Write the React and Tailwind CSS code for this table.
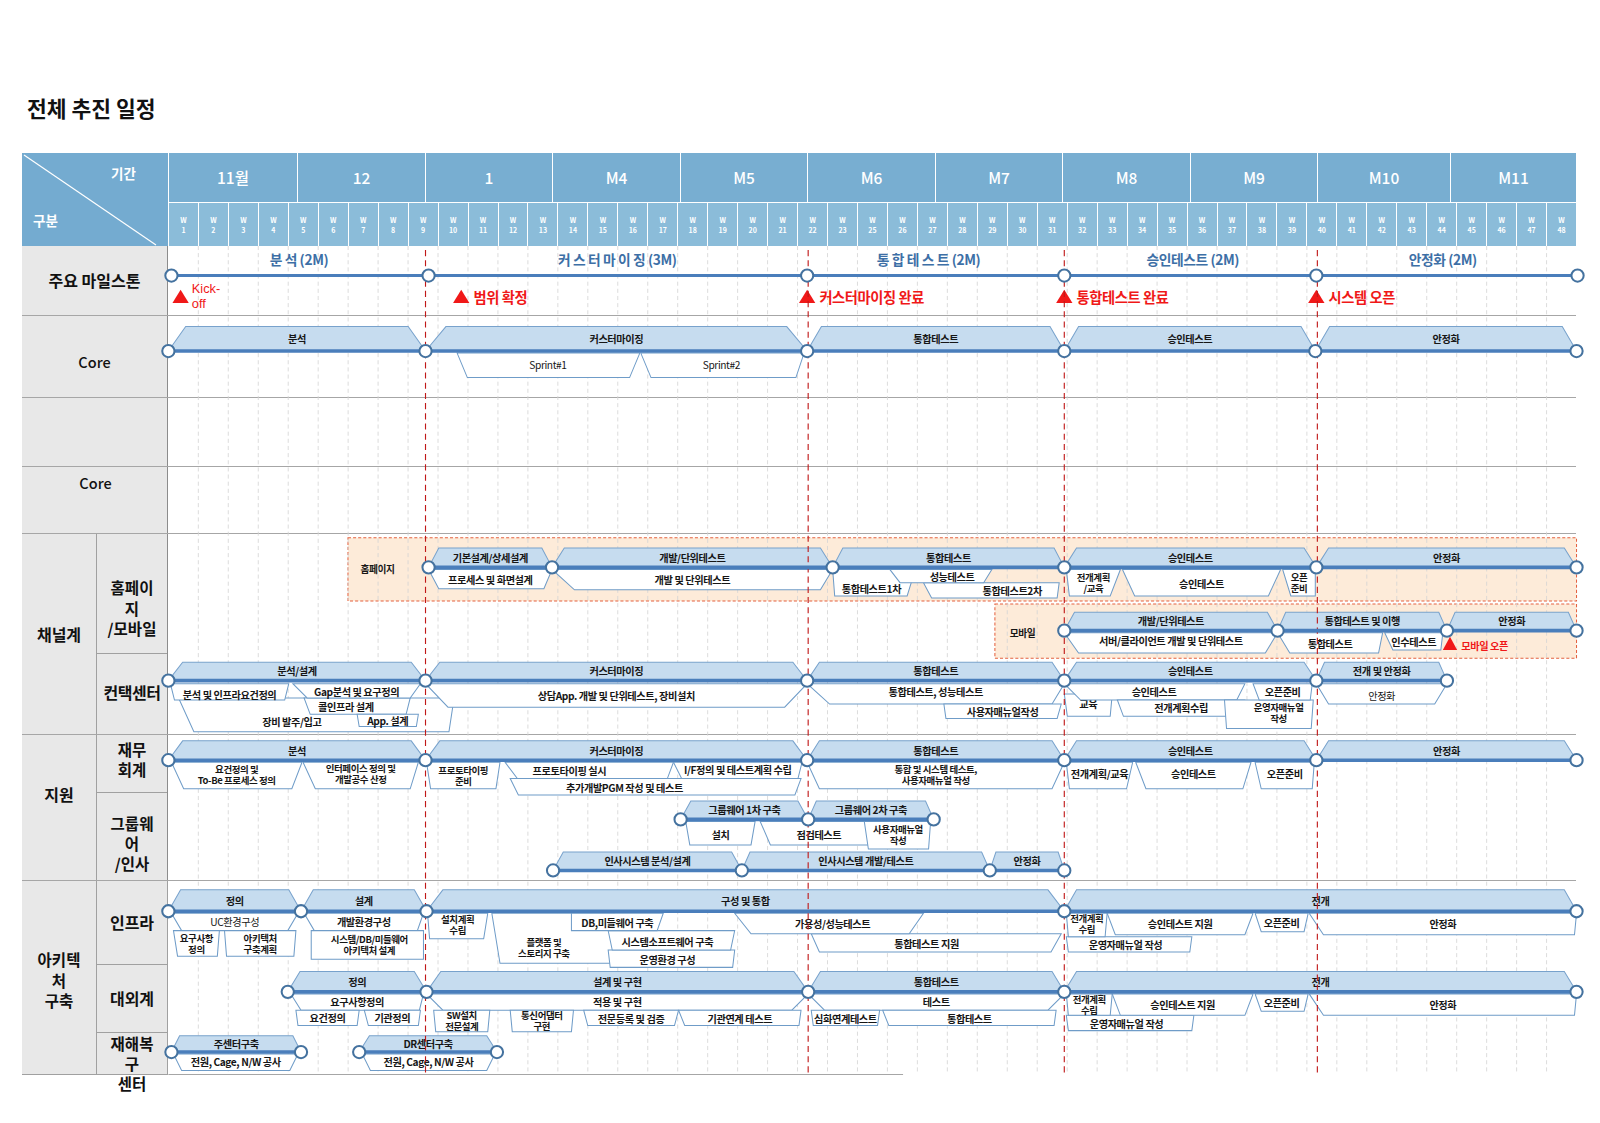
import React from 'react'

const MONTHS = [
  ['11월', 129], ['12', 128], ['1', 127], ['M4', 128], ['M5', 127], ['M6', 128],
  ['M7', 127], ['M8', 128], ['M9', 127], ['M10', 133], ['M11', 126],
]
const WEEKS = Array.from({ length: 48 }, (_, i) => i + 1).filter((n) => n !== 24)

// chart coordinates are drawn on a 1568-wide canvas, scaled up to the page
const X0 = 165
const WW = 1380 / 47

// [a, b, lineY, topY, label, inset]
const PHASES = [
  // core
  [165, 417, 344, 320, '분석', 17], [417, 791, 344, 320, '커스터마이징', 20], [791, 1043, 344, 320, '통합테스트', 14],
  [1043, 1289, 344, 320, '승인테스트', 14], [1289, 1545, 344, 320, '안정화', 14],
  // homepage
  [420, 541, 556, 537, '기본설계/상세설계', 10], [541, 816, 556, 537, '개발/단위테스트', 12], [816, 1043, 556, 537, '통합테스트', 10],
  [1043, 1290, 556, 537, '승인테스트', 12], [1290, 1545, 556, 537, '안정화', 12],
  // mobile
  [1043, 1252, 618, 600, '개발/단위테스트', 10], [1252, 1418, 618, 600, '통합테스트 및 이행', 8], [1418, 1545, 618, 600, '안정화', 8],
  // contact center
  [165, 417, 667, 649, '분석/설계', 14], [417, 791, 667, 649, '커스터마이징', 14], [791, 1043, 667, 649, '통합테스트', 12],
  [1043, 1290, 667, 649, '승인테스트', 12], [1290, 1418, 667, 649, '전개 및 안정화', 8],
  // finance
  [165, 417, 745, 726, '분석', 14], [417, 791, 745, 726, '커스터마이징', 14], [791, 1043, 745, 726, '통합테스트', 12],
  [1043, 1290, 745, 726, '승인테스트', 12], [1290, 1545, 745, 726, '안정화', 12],
  // groupware
  [667, 792, 803, 785, '그룹웨어 1차 구축', 10], [792, 915, 803, 785, '그룹웨어 2차 구축', 8],
  // hr
  [542, 727, 853, 835, '인사시스템 분석/설계', 10], [727, 970, 853, 835, '인사시스템 개발/테스트', 8], [970, 1043, 853, 835, '안정화', 6],
  // infra
  [165, 295, 893, 872, '정의', 12], [295, 418, 893, 872, '설계', 12], [418, 1043, 893, 872, '구성 및 통합', 16],
  [1043, 1545, 893, 872, '전개', 12],
  // external
  [282, 418, 972, 952, '정의', 12], [418, 792, 972, 952, '설계 및 구현', 14], [792, 1043, 972, 952, '통합테스트', 12],
  [1043, 1545, 972, 952, '전개', 12],
  // dr
  [168, 295, 1031, 1015, '주센터구축', 8], [352, 487, 1031, 1015, 'DR센터구축', 10],
]

const TRACKS = [
  { y: 344, a: 165, b: 1545, nodes: [165, 417, 791, 1043, 1289, 1545] },
  { y: 556, a: 420, b: 1545, nodes: [420, 541, 816, 1043, 1290, 1545] },
  { y: 618, a: 1043, b: 1545, nodes: [1043, 1252, 1418, 1545] },
  { y: 667, a: 165, b: 1418, nodes: [165, 417, 791, 1043, 1290, 1418] },
  { y: 745, a: 165, b: 1545, nodes: [165, 417, 791, 1043, 1290, 1545] },
  { y: 803, a: 667, b: 915, nodes: [667, 792, 915] },
  { y: 853, a: 542, b: 1043, nodes: [542, 727, 970, 1043] },
  { y: 893, a: 165, b: 1545, nodes: [165, 295, 418, 1043, 1545] },
  { y: 972, a: 282, b: 1545, nodes: [282, 418, 792, 1043, 1545] },
  { y: 1031, a: 168, b: 295, nodes: [168, 295] },
  { y: 1031, a: 352, b: 487, nodes: [352, 487] },
]

const TASKS = [
  // core
  { a: 448, b: 627, y: 346, bot: 370, l: 10, r: 10, t: 'Sprint#1', w: 400, lx: 537, ly: 357 },
  { a: 628, b: 788, y: 346, bot: 370, l: 10, r: 8, t: 'Sprint#2', w: 400, lx: 707, ly: 357 },
  // homepage
  { a: 420, b: 541, y: 558, bot: 577, l: 10, r: 8, t: '프로세스 및 화면설계' },
  { a: 541, b: 816, y: 558, bot: 578, l: 22, r: 12, t: '개발 및 단위테스트', ly: 567 },
  { a: 905, b: 1038, y: 571, bot: 586, l: 8, r: 2, t: '통합테스트2차', lx: 992, ly: 578 },
  { a: 816, b: 897, y: 558, bot: 584, l: 2, r: 8, t: '통합테스트1차', lx: 854, ly: 576 },
  { a: 872, b: 972, y: 558, bot: 571, l: 10, r: 8, t: '성능테스트', lx: 933, ly: 564 },
  { a: 1045, b: 1098, y: 558, bot: 584, l: 3, r: 10, t: ['전개계획', '/교육'] },
  { a: 1100, b: 1255, y: 558, bot: 584, l: 12, r: 12, t: '승인테스트' },
  { a: 1257, b: 1289, y: 558, bot: 584, l: 8, r: 0, t: ['오픈', '준비'] },
  // mobile
  { a: 1043, b: 1252, y: 620, bot: 640, l: 14, r: 12, t: '서버/클라이언트 개발 및 단위테스트', ly: 627 },
  { a: 1252, b: 1355, y: 620, bot: 640, l: 12, r: 4, t: '통합테스트', ly: 630 },
  { a: 1357, b: 1414, y: 620, bot: 637, l: 8, r: 2, t: '인수테스트', ly: 628 },
  // contact center
  { a: 175, b: 445, y: 684, bot: 717, l: 15, r: 5, t: '장비 발주/입고', lx: 286, ly: 707 },
  { a: 167, b: 283, y: 670, bot: 686, l: 4, r: 4, t: '분석 및 인프라요건정의', ly: 680 },
  { a: 298, b: 402, y: 684, bot: 700, l: 6, r: 4, t: '콜인프라 설계', lx: 339, ly: 692 },
  { a: 287, b: 412, y: 670, bot: 684, l: 14, r: 10, t: 'Gap분석 및 요구정의', ly: 677 },
  { a: 350, b: 410, y: 700, bot: 712, l: 2, r: 2, t: 'App. 설계' },
  { a: 417, b: 791, y: 670, bot: 693, l: 22, r: 22, t: '상담App. 개발 및 단위테스트, 장비설치', ly: 681 },
  { a: 791, b: 1043, y: 670, bot: 690, l: 22, r: 12, t: '통합테스트, 성능테스트', ly: 677 },
  { a: 925, b: 1040, y: 690, bot: 704, l: 2, r: 4, t: '사용자매뉴얼작성' },
  { a: 1043, b: 1090, y: 680, bot: 702, l: 3, r: 2, t: '교육', ly: 689 },
  { a: 1043, b: 1220, y: 670, bot: 686, l: 16, r: 8, t: '승인테스트', lx: 1131, ly: 677 },
  { a: 1095, b: 1220, y: 686, bot: 702, l: 6, r: 2, t: '전개계획수립', ly: 693 },
  { a: 1200, b: 1287, y: 686, bot: 714, l: 2, r: 2, t: ['운영자매뉴얼', '작성'], lx: 1253, ly: 698 },
  { a: 1228, b: 1286, y: 670, bot: 686, l: 6, r: 2, t: '오픈준비', ly: 677 },
  { a: 1290, b: 1418, y: 670, bot: 690, l: 12, r: 12, t: '안정화', w: 400, ly: 681 },
  // finance
  { a: 168, b: 296, y: 747, bot: 773, l: 12, r: 10, t: ['요건정의 및', 'To-Be 프로세스 정의'], ly: 759 },
  { a: 297, b: 410, y: 747, bot: 773, l: 12, r: 8, t: ['인터페이스 정의 및', '개발공수 산정'], ly: 758 },
  { a: 418, b: 490, y: 747, bot: 773, l: 4, r: 4, t: ['프로토타이핑', '준비'] },
  { a: 500, b: 785, y: 763, bot: 779, l: 8, r: 6, t: '추가개발PGM 작성 및 테스트', lx: 612, ly: 771 },
  { a: 495, b: 660, y: 747, bot: 763, l: 12, r: 6, t: '프로토타이핑 실시', lx: 558, ly: 755 },
  { a: 660, b: 786, y: 747, bot: 763, l: 8, r: 4, t: 'I/F정의 및 테스트계획 수립', ly: 754 },
  { a: 791, b: 1043, y: 747, bot: 773, l: 12, r: 12, t: ['통합 및 시스템 테스트,', '사용자매뉴얼 작성'], ly: 759 },
  { a: 1045, b: 1110, y: 747, bot: 773, l: 3, r: 6, t: '전개계획/교육', ly: 758 },
  { a: 1113, b: 1226, y: 747, bot: 773, l: 10, r: 8, t: '승인테스트', ly: 758 },
  { a: 1230, b: 1288, y: 747, bot: 773, l: 6, r: 2, t: '오픈준비', ly: 758 },
  // groupware
  { a: 672, b: 740, y: 805, bot: 828, l: 4, r: 4, t: '설치', ly: 817 },
  { a: 745, b: 860, y: 805, bot: 828, l: 10, r: 6, t: '점검테스트', ly: 817 },
  { a: 847, b: 912, y: 805, bot: 832, l: 4, r: 2, t: ['사용자매뉴얼', '작성'], lx: 880, ly: 818 },
  // infra
  { a: 168, b: 292, y: 895, bot: 912, l: 10, r: 10, t: 'UC환경구성', w: 400, ly: 903 },
  { a: 170, b: 215, y: 912, bot: 937, l: 4, r: 2, t: ['요구사항', '정의'] },
  { a: 220, b: 290, y: 912, bot: 937, l: 2, r: 2, t: ['아키텍처', '구축계획'] },
  { a: 298, b: 415, y: 895, bot: 912, l: 10, r: 6, t: '개발환경구성', ly: 903 },
  { a: 305, b: 415, y: 912, bot: 940, l: 0, r: 0, t: ['시스템/DB/미들웨어', '아키텍처 설계'], lx: 362 },
  { a: 419, b: 478, y: 895, bot: 920, l: 2, r: 4, t: ['설치계획', '수립'], ly: 906 },
  { a: 482, b: 602, y: 895, bot: 944, l: 8, r: 2, t: ['플랫폼 및', '스토리지 구축'], lx: 533, ly: 929 },
  { a: 596, b: 720, y: 931, bot: 948, l: 2, r: 2, t: '운영환경 구성', lx: 654, ly: 940 },
  { a: 596, b: 720, y: 912, bot: 931, l: 4, r: 4, t: '시스템소프트웨어 구축', lx: 654, ly: 922 },
  { a: 560, b: 650, y: 895, bot: 912, l: 0, r: 6, t: 'DB,미들웨어 구축', ly: 904 },
  { a: 795, b: 1040, y: 915, bot: 933, l: 8, r: 10, t: '통합테스트 지원', lx: 908, ly: 924 },
  { a: 720, b: 905, y: 895, bot: 915, l: 16, r: 14, t: '가용성/성능테스트', lx: 816, ly: 905 },
  { a: 1045, b: 1168, y: 918, bot: 933, l: 2, r: 2, t: '운영자매뉴얼 작성', lx: 1103, ly: 925 },
  { a: 1045, b: 1085, y: 895, bot: 918, l: 2, r: 2, t: ['전개계획', '수립'], ly: 905 },
  { a: 1085, b: 1228, y: 895, bot: 916, l: 8, r: 8, t: '승인테스트 지원', ly: 905 },
  { a: 1230, b: 1282, y: 895, bot: 913, l: 6, r: 4, t: '오픈준비', ly: 904 },
  { a: 1283, b: 1545, y: 895, bot: 916, l: 14, r: 2, t: '안정화', ly: 905 },
  // external
  { a: 285, b: 415, y: 974, bot: 990, l: 10, r: 4, t: '요구사항정의', ly: 981 },
  { a: 290, b: 352, y: 990, bot: 1005, l: 2, r: 2, t: '요건정의', ly: 997 },
  { a: 357, b: 412, y: 990, bot: 1005, l: 4, r: 2, t: '기관정의', ly: 997 },
  { a: 418, b: 792, y: 974, bot: 990, l: 16, r: 16, t: '적용 및 구현', ly: 981 },
  { a: 425, b: 480, y: 990, bot: 1011, l: 2, r: 2, t: ['SW설치', '전문설계'] },
  { a: 500, b: 562, y: 990, bot: 1011, l: 2, r: 2, t: ['통신어댑터', '구현'] },
  { a: 572, b: 665, y: 990, bot: 1005, l: 4, r: 4, t: '전문등록 및 검증', ly: 998 },
  { a: 665, b: 785, y: 990, bot: 1005, l: 6, r: 2, t: '기관연계 테스트', ly: 998 },
  { a: 792, b: 1043, y: 974, bot: 990, l: 16, r: 16, t: '테스트', ly: 981 },
  { a: 795, b: 862, y: 990, bot: 1005, l: 2, r: 2, t: '심화연계테스트', ly: 998 },
  { a: 865, b: 1035, y: 990, bot: 1005, l: 6, r: 2, t: '통합테스트', ly: 998 },
  { a: 1045, b: 1170, y: 995, bot: 1010, l: 2, r: 2, t: '운영자매뉴얼 작성', lx: 1104, ly: 1003 },
  { a: 1045, b: 1090, y: 974, bot: 995, l: 2, r: 2, t: ['전개계획', '수립'], ly: 984 },
  { a: 1090, b: 1228, y: 974, bot: 995, l: 8, r: 8, t: '승인테스트 지원', ly: 984 },
  { a: 1230, b: 1282, y: 974, bot: 991, l: 6, r: 4, t: '오픈준비', ly: 982 },
  { a: 1283, b: 1545, y: 974, bot: 995, l: 14, r: 2, t: '안정화', ly: 984 },
  // dr
  { a: 170, b: 292, y: 1033, bot: 1049, l: 8, r: 8, t: '전원, Cage, N/W 공사', ly: 1040 },
  { a: 355, b: 485, y: 1033, bot: 1049, l: 8, r: 8, t: '전원, Cage, N/W 공사', ly: 1040 },
]

const STAGES = [
  ['분 석 (2M)', 293], ['커 스 터 마 이 징 (3M)', 605], ['통 합 테 스 트 (2M)', 910],
  ['승인테스트 (2M)', 1169], ['안정화 (2M)', 1414],
]
const MILESTONES = [
  [452, '범위 확정'], [791, '커스터마이징 완료'], [1043, '통합테스트 완료'], [1290, '시스템 오픈'],
]

function Txt({ x, y, t, size = 10, w = 700, color = '#161616', anchor = 'middle' }) {
  const lines = Array.isArray(t) ? t : [t]
  const multi = lines.length > 1
  const fs = multi ? 9.3 : size
  const lh = 10.8
  const y0 = y - ((lines.length - 1) * lh) / 2
  return (
    <text textAnchor={anchor} fontSize={fs} fontWeight={w} fill={color} letterSpacing="-0.4" dominantBaseline="central">
      {lines.map((s, i) => (
        <tspan key={i} x={x} y={y0 + i * lh}>{s}</tspan>
      ))}
    </text>
  )
}

function Tri({ x, y, s = 8 }) {
  return <polygon points={`${x - s},${y + 6} ${x},${y - 7} ${x + s},${y + 6}`} fill="#f01818" />
}

function Chart() {
  const grid = Array.from({ length: 46 }, (_, i) => X0 + (i + 1) * WW)
  return (
    <svg
      className="pointer-events-none absolute left-0 top-0"
      width="1600"
      height="1123"
      viewBox="0 0 1568 1100.5"
      style={{ fontFamily: "'Noto Sans CJK KR','Noto Sans',sans-serif" }}
    >
      {/* highlighted zones */}
      <rect x="341" y="527" width="1204" height="62" fill="#fdebd9" stroke="#e4613f" strokeWidth="1" strokeDasharray="3 2" />
      <rect x="975" y="592" width="570" height="53" fill="#fdebd9" stroke="#e4613f" strokeWidth="1" strokeDasharray="3 2" />
      <Txt x={370} y={558} t="홈페이지" size={9.5} />
      <Txt x={1002} y={620} t="모바일" size={9.5} />

      {/* week grid */}
      {grid.map((x, i) => (
        <line key={i} x1={x} x2={x} y1="241" y2="1053" stroke="#d4d4d4" strokeWidth="0.8" strokeDasharray="4 3" />
      ))}
      <line x1="165" x2="885" y1="1053" y2="1053" stroke="#a6a6a6" strokeWidth="1" />

      {/* milestone row */}
      {STAGES.map(([t, x]) => (
        <Txt key={t} x={x} y={254} t={t} size={13.5} color="#3d6fa6" w={700} />
      ))}
      <line x1="168" x2="1546" y1="270" y2="270" stroke="#4a7ebb" strokeWidth="3" />
      <Tri x={177} y={291} />
      <text x="188" y="287" fontSize="12.5" fill="#f01818" fontFamily="'Liberation Sans',sans-serif">Kick-</text>
      <text x="188" y="302" fontSize="12.5" fill="#f01818" fontFamily="'Liberation Sans',sans-serif">off</text>
      {MILESTONES.map(([x, t]) => (
        <g key={t}>
          <Tri x={x} y={291} />
          <Txt x={x + 12} y={290} t={t} size={14} color="#f01818" anchor="start" />
        </g>
      ))}

      {/* tasks */}
      {TASKS.map((k, i) => (
        <g key={i}>
          <polygon
            points={`${k.a},${k.y} ${k.b},${k.y} ${k.b - k.r},${k.bot} ${k.a + k.l},${k.bot}`}
            fill="#ffffff"
            stroke="#6f9cc8"
            strokeWidth="1"
          />
          <Txt x={k.lx ?? (k.a + k.b) / 2} y={k.ly ?? (k.y + k.bot) / 2} t={k.t} w={k.w ?? 700} />
        </g>
      ))}

      {/* phases */}
      {PHASES.map(([a, b, y, top, t, s], i) => (
        <g key={i}>
          <polygon points={`${a},${y} ${a + s},${top} ${b - s},${top} ${b},${y}`} fill="#c6dcef" stroke="#78a2cc" strokeWidth="1" />
          <Txt x={(a + b) / 2} y={(top + y) / 2 - 1} t={t} />
        </g>
      ))}

      {/* period markers */}
      {[417, 792, 1043, 1291].map((x) => (
        <line key={x} x1={x} x2={x} y1="245" y2="1053" stroke="#c01818" strokeWidth="1.1" strokeDasharray="6 4" />
      ))}

      {/* tracks and nodes */}
      {TRACKS.map((tr, i) => (
        <line key={i} x1={tr.a} x2={tr.b} y1={tr.y} y2={tr.y} stroke="#4a7ebb" strokeWidth="3.5" />
      ))}
      {[168, 420, 791, 1043, 1290, 1546].map((x) => (
        <circle key={x} cx={x} cy="270" r="6" fill="#fff" stroke="#44729f" strokeWidth="2" />
      ))}
      {TRACKS.flatMap((tr, i) =>
        tr.nodes.map((x) => <circle key={`${i}-${x}`} cx={x} cy={tr.y} r="6" fill="#fff" stroke="#44729f" strokeWidth="2" />)
      )}

      <Tri x={1421} y={631} s={7} />
      <Txt x={1432} y={632} t="모바일 오픈" size={10} color="#f01818" anchor="start" />
    </svg>
  )
}

function Head() {
  return (
    <div className="flex h-[93px]">
      <div className="relative w-[146px] bg-[#74abd0] text-[13.5px] font-bold text-white">
        <svg className="absolute inset-0" width="146" height="93">
          <line x1="2" y1="2" x2="134" y2="92" stroke="#ffffff" strokeWidth="1.2" />
        </svg>
        <span className="absolute left-[89px] top-[10px]">기간</span>
        <span className="absolute left-[11px] top-[57px]">구분</span>
      </div>
      <div className="flex w-[1408px] flex-col">
        <div className="flex h-[49px] bg-[#78aed1]">
          {MONTHS.map(([m, w]) => (
            <div
              key={m}
              style={{ width: w }}
              className="flex items-center justify-center border-l border-white text-[15.5px] font-medium text-white"
            >
              {m}
            </div>
          ))}
        </div>
        <div className="grid flex-1 grid-cols-[repeat(47,minmax(0,1fr))] bg-[#8bbcd9]">
          {WEEKS.map((n) => (
            <div
              key={n}
              className="flex flex-col items-center justify-center border-l border-t border-white text-[7px] font-bold leading-[10px] text-white"
            >
              <span>W</span>
              <span>{n}</span>
            </div>
          ))}
        </div>
      </div>
    </div>
  )
}

// single-line labels
const cellBase = 'bg-[#e8e8e8] font-bold text-[16px] text-[#111] leading-[20.5px] text-center'
// stacked labels
const cellStack = 'bg-[#e8e8e8] font-bold text-[15.5px] text-[#111] text-center'

export default function App() {
  return (
    <div className="relative h-[1123px] w-[1600px] overflow-hidden bg-white font-['Noto_Sans_CJK_KR','Noto_Sans',sans-serif] text-[#111]">
      <h1 className="pl-[27px] pt-[95px] text-[21.5px] font-bold leading-[26px]">전체 추진 일정</h1>

      <div className="ml-[22px] mt-[32px] w-[1554px]">
        <Head />

        <div className="flex h-[70px] border-b border-[#a6a6a6]">
          <div className={`${cellBase} flex w-[146px] items-center justify-center border-r border-[#8c8c8c]`}>주요 마일스톤</div>
          <div className="flex-1" />
        </div>

        <div className="flex h-[82px] border-b border-[#a6a6a6]">
          <div className="flex w-[146px] items-center justify-center border-r border-[#8c8c8c] bg-[#e8e8e8] pt-[11px] text-[14.5px] font-medium">Core</div>
          <div className="flex-1" />
        </div>

        <div className="flex h-[69px] border-b border-[#a6a6a6]">
          <div className="w-[146px] border-r border-[#8c8c8c] bg-[#e8e8e8]" />
          <div className="flex-1" />
        </div>

        <div className="flex h-[67px] border-b border-[#a6a6a6]">
          <div className="w-[146px] border-r border-[#8c8c8c] bg-[#e8e8e8] pl-[2px] pt-[6px] text-center text-[14.5px] font-medium leading-[20px]">Core</div>
          <div className="flex-1" />
        </div>

        <div className="flex h-[201px] border-b border-[#a6a6a6]">
          <div className={`${cellBase} flex w-[75px] items-center justify-center border-r border-[#a0a0a0]`}>채널계</div>
          <div className="flex w-[71px] flex-col border-r border-[#8c8c8c]">
            <div className={`${cellStack} h-[120px] border-b border-[#a0a0a0] pt-[43px] leading-[20.5px]`}>
              홈페이<br />지<br />/모바일
            </div>
            <div className={`${cellBase} flex flex-1 items-center justify-center pb-[4px] tracking-[-0.5px]`}>컨택센터</div>
          </div>
          <div className="flex-1" />
        </div>

        <div className="flex h-[146px] border-b border-[#a6a6a6]">
          <div className={`${cellBase} w-[75px] border-r border-[#a0a0a0] pt-[49px]`}>지원</div>
          <div className="flex w-[71px] flex-col border-r border-[#8c8c8c]">
            <div className={`${cellStack} h-[58px] border-b border-[#a0a0a0] pt-[5px] leading-[19.5px]`}>
              재무<br />회계
            </div>
            <div className={`${cellStack} flex-1 pt-[20px] leading-[20px]`}>
              그룹웨<br />어<br />/인사
            </div>
          </div>
          <div className="flex-1" />
        </div>

        <div className="flex h-[194px]">
          <div className={`${cellStack} w-[75px] border-b border-r border-[#a0a0a0] pt-[68px] leading-[20.5px]`}>
            아키텍<br />처<br />구축
          </div>
          <div className="flex w-[71px] flex-col">
            <div className={`${cellBase} flex h-[84px] items-center justify-center border-b border-r border-[#a0a0a0]`}>인프라</div>
            <div className={`${cellBase} flex h-[68px] items-center justify-center border-b border-r border-[#a0a0a0]`}>대외계</div>
            <div className={`${cellStack} h-[42px] overflow-visible border-b border-r border-[#a0a0a0] leading-[20px]`}>
              재해복<br />구<br />센터
            </div>
          </div>
          <div className="flex-1" />
        </div>
      </div>

      <Chart />
    </div>
  )
}
